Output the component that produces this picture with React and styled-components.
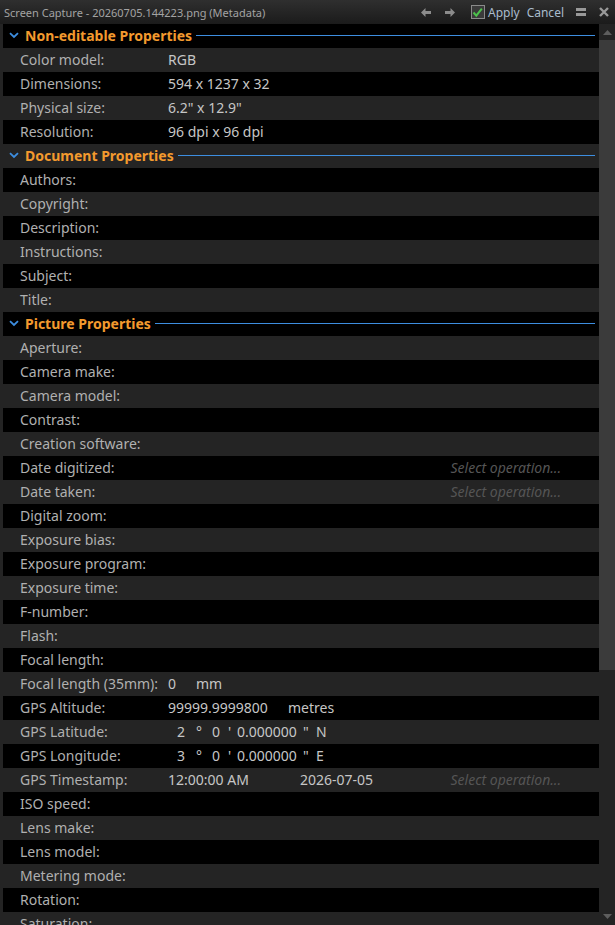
import React from 'react';
import styled, {createGlobalStyle} from 'styled-components';

const sections = [
  {
    title: 'Non-editable Properties',
    rows: [
      {label: 'Color model:', value: 'RGB'},
      {label: 'Dimensions:', value: '594 x 1237 x 32'},
      {label: 'Physical size:', value: '6.2" x 12.9"'},
      {label: 'Resolution:', value: '96 dpi x 96 dpi'},
    ],
  },
  {
    title: 'Document Properties',
    rows: ['Authors:', 'Copyright:', 'Description:', 'Instructions:', 'Subject:', 'Title:'].map(label => ({label})),
  },
  {
    title: 'Picture Properties',
    rows: [
      {label: 'Aperture:'},
      {label: 'Camera make:'},
      {label: 'Camera model:'},
      {label: 'Contrast:'},
      {label: 'Creation software:'},
      {label: 'Date digitized:', op: true},
      {label: 'Date taken:', op: true},
      {label: 'Digital zoom:'},
      {label: 'Exposure bias:'},
      {label: 'Exposure program:'},
      {label: 'Exposure time:'},
      {label: 'F-number:'},
      {label: 'Flash:'},
      {label: 'Focal length:'},
      {label: 'Focal length (35mm):', kind: 'focal'},
      {label: 'GPS Altitude:', kind: 'alt'},
      {label: 'GPS Latitude:', kind: 'coord', deg: '2', ref: 'N'},
      {label: 'GPS Longitude:', kind: 'coord', deg: '3', ref: 'E'},
      {label: 'GPS Timestamp:', kind: 'time', op: true},
      {label: 'ISO speed:'},
      {label: 'Lens make:'},
      {label: 'Lens model:'},
      {label: 'Metering mode:'},
      {label: 'Rotation:'},
      {label: 'Saturation:'},
    ],
  },
];

const renderValue = row => {
  if (row.kind === 'focal') {
    return (
      <Value>
        <Part $w={28}>0</Part>
        <Part>mm</Part>
      </Value>
    );
  }
  if (row.kind === 'alt') {
    return (
      <Value>
        <Part $w={120}>99999.9999800</Part>
        <Part>metres</Part>
      </Value>
    );
  }
  if (row.kind === 'coord') {
    return (
      <Value $pad={9}>
        <Part $w={19}>{row.deg}</Part>
        <Part $w={16}>°</Part>
        <Part $w={16}>0</Part>
        <Part $w={9}>'</Part>
        <Part $w={66}>0.000000</Part>
        <Part $w={13}>"</Part>
        <Part>{row.ref}</Part>
      </Value>
    );
  }
  if (row.kind === 'time') {
    return (
      <Value $pad={-1}>
        <Part $w={132}>12:00:00 AM</Part>
        <Part>2026-07-05</Part>
      </Value>
    );
  }
  return <Value>{row.value}</Value>;
};

const Chevron = () => (
  <svg width="10" height="7" viewBox="0 0 10 7">
    <path d="M1 1.2 L5 5 L9 1.2" fill="none" stroke="#3d8ee0" strokeWidth="1.8" />
  </svg>
);

const Arrow = ({dir}) => (
  <svg width="10" height="9" viewBox="0 0 10 9" style={{transform: dir === 'right' ? 'scaleX(-1)' : 'none'}}>
    <path d="M0 4.5 L4.5 0 L4.5 3 L10 3 L10 6 L4.5 6 L4.5 9 Z" fill="#8c8c8c" />
  </svg>
);

const Check = () => (
  <CheckBox>
    <svg width="11" height="11" viewBox="0 0 11 11">
      <path d="M1.5 5.5 L4.3 8.6 L9.8 1.6" fill="none" stroke="#4cc24c" strokeWidth="2" />
    </svg>
  </CheckBox>
);

const Metadata = () => {
  let index = 0;
  return (
    <Window>
      <GlobalStyle />
      <TitleBar>
        <Title>Screen Capture - 20260705.144223.png (Metadata)</Title>
        <Controls>
          <IconBtn $w={24}><Arrow dir="left" /></IconBtn>
          <IconBtn $w={24}><Arrow dir="right" /></IconBtn>
          <Check />
          <Action $gap={3}>Apply</Action>
          <Action $gap={7}>Cancel</Action>
          <IconBtn $w={24} $gap={5}>
            <svg width="10" height="8" viewBox="0 0 10 8">
              <rect x="0" y="0" width="10" height="3" fill="#999" />
              <rect x="0" y="5" width="10" height="3" fill="#999" />
            </svg>
          </IconBtn>
          <IconBtn $w={22}>
            <svg width="10" height="10" viewBox="0 0 10 10">
              <path d="M1 1 L9 9 M9 1 L1 9" stroke="#999" strokeWidth="2.4" />
            </svg>
          </IconBtn>
        </Controls>
      </TitleBar>
      <Body>
        <List>
          {sections.map(section => {
            const headAlt = index++ % 2 === 1;
            return (
              <React.Fragment key={section.title}>
                <Header $alt={headAlt}>
                  <Chevron />
                  <HeaderText>{section.title}</HeaderText>
                  <Rule />
                </Header>
                {section.rows.map(row => {
                  const alt = index++ % 2 === 1;
                  return (
                    <Row key={row.label} $alt={alt}>
                      <Label>{row.label}</Label>
                      {renderValue(row)}
                      {row.op && <Operation>Select operation...</Operation>}
                    </Row>
                  );
                })}
              </React.Fragment>
            );
          })}
        </List>
        <Scrollbar>
          <ScrollArrow>
            <svg width="9" height="6" viewBox="0 0 9 6">
              <path d="M0 6 L4.5 1 L9 6 Z" fill="#5e5e5e" />
            </svg>
          </ScrollArrow>
          <Thumb />
          <Track />
          <ScrollArrow>
            <svg width="9" height="6" viewBox="0 0 9 6">
              <path d="M0 0 L4.5 5 L9 0 Z" fill="#5e5e5e" />
            </svg>
          </ScrollArrow>
        </Scrollbar>
      </Body>
    </Window>
  );
};

const GlobalStyle = createGlobalStyle`
  html, body {
    margin: 0;
    padding: 0;
    background: #000;
  }
  * {
    box-sizing: border-box;
  }
`;

const Window = styled.div`
  width: 615px;
  height: 925px;
  display: flex;
  flex-direction: column;
  overflow: hidden;
  font-family: "Noto Sans", "Open Sans", sans-serif;
  background: #000;
`;

const TitleBar = styled.div`
  height: 24px;
  flex: none;
  display: flex;
  align-items: center;
  justify-content: space-between;
  padding-left: 4px;
  background: linear-gradient(#2f2f2f, #1b1b1b);
`;

const Title = styled.div`
  color: #a3a3a3;
  font-size: 11px;
  white-space: nowrap;
`;

const Controls = styled.div`
  display: flex;
  align-items: center;
  height: 100%;
`;

const IconBtn = styled.div`
  width: ${p => p.$w}px;
  margin-left: ${p => p.$gap || 0}px;
  height: 100%;
  display: flex;
  align-items: center;
  justify-content: center;
`;

const CheckBox = styled.div`
  width: 14px;
  height: 14px;
  margin-left: 9px;
  border: 1px solid #8a8a8a;
  background: #3a3a3a;
  display: flex;
  align-items: center;
  justify-content: center;
`;

const Action = styled.div`
  color: #a9bccd;
  font-size: 12px;
  margin-left: ${p => p.$gap}px;
`;

const Body = styled.div`
  flex: 1;
  display: flex;
  min-height: 0;
  border-left: 3px solid #242424;
`;

const List = styled.div`
  flex: 1;
  overflow: hidden;
`;

const Row = styled.div`
  height: 24px;
  display: flex;
  align-items: center;
  padding-left: 17px;
  padding-bottom: 1px;
  background: ${p => (p.$alt ? '#242424' : '#000')};
  font-size: 14px;
  white-space: nowrap;
`;

const Header = styled(Row)`
  padding-left: 6px;
  padding-right: 4px;
`;

const HeaderText = styled.div`
  color: #f39a2e;
  font-weight: 700;
  font-size: 14px;
  margin-left: 6px;
  margin-right: 4px;
`;

const Rule = styled.div`
  flex: 1;
  height: 1px;
  background: #3d8ee0;
`;

const Label = styled.div`
  width: 148px;
  flex: none;
  color: #b0b0b0;
`;

const Value = styled.div`
  display: flex;
  color: #c6c6c6;
  padding-left: ${p => p.$pad || 0}px;
`;

const Part = styled.span`
  width: ${p => (p.$w ? `${p.$w}px` : 'auto')};
  flex: none;
`;

const Operation = styled.div`
  margin-left: auto;
  margin-right: 38px;
  color: #555;
  font-style: italic;
`;

const Scrollbar = styled.div`
  width: 16px;
  flex: none;
  display: flex;
  flex-direction: column;
  background: #242424;
`;

const ScrollArrow = styled.div`
  height: 16px;
  flex: none;
  display: flex;
  align-items: center;
  justify-content: center;
`;

const Thumb = styled.div`
  height: 630px;
  flex: none;
  background: #3b3b3b;
`;

const Track = styled.div`
  flex: 1;
`;

export default Metadata;
